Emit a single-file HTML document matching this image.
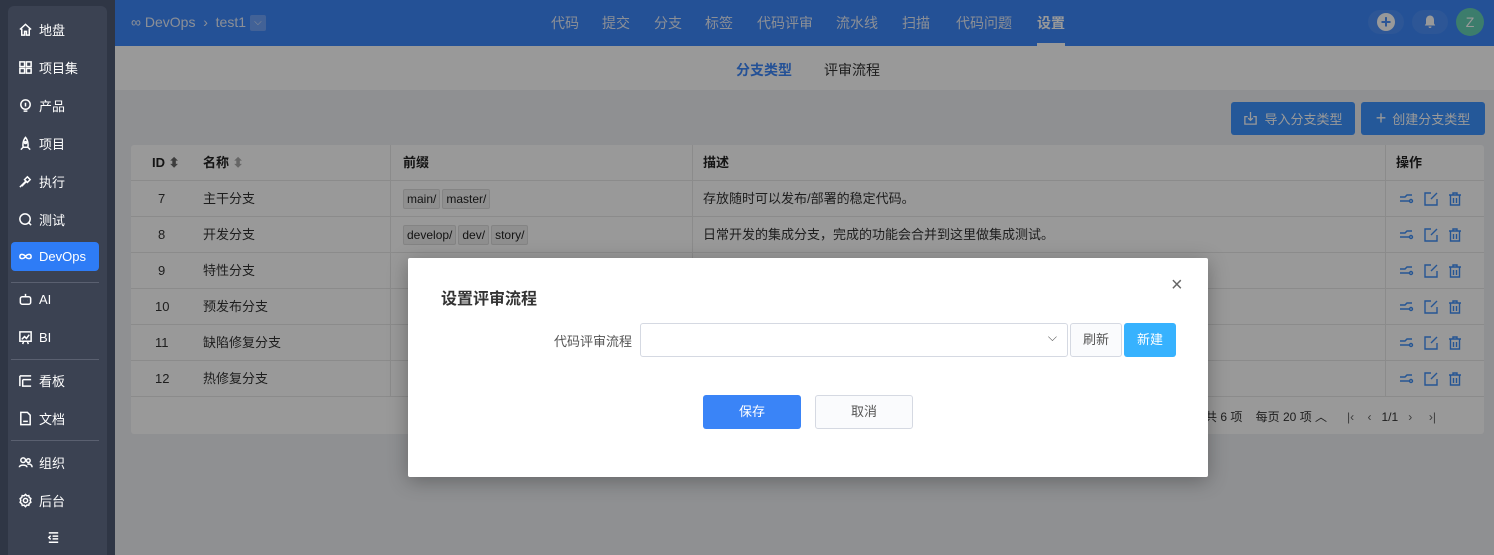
<!DOCTYPE html>
<html><head><meta charset="utf-8"><style>
*{box-sizing:border-box;margin:0;padding:0}
body{width:1494px;height:555px;overflow:hidden;font-family:"Liberation Sans","Noto Sans CJK SC",sans-serif;font-size:13px;background:#eef0f3;position:relative;color:#222}
.side{position:absolute;left:0;top:0;width:115px;height:555px;background:#2f3645;z-index:5}
.sp{position:absolute;left:8px;top:6px;width:99px;height:549px;background:#3b4252;border-radius:6px 6px 0 0}
.it{position:absolute;left:18px;height:28px;display:flex;align-items:center;color:#fff;font-size:13px}
.it svg{width:15px;height:15px;margin-right:6px;fill:none;stroke:#fff;stroke-width:1.6}
.act{position:absolute;left:11px;top:242px;width:88px;height:29px;background:#2e7cf6;border-radius:4px}
.hr{position:absolute;left:11px;width:88px;height:1px;background:#5a6070}
.top{position:absolute;left:115px;top:0;width:1379px;height:46px;background:#3d87fb}
.nav{position:absolute;top:13px;color:#e8eefa;font-size:14px}
.sub{position:absolute;left:115px;top:46px;width:1379px;height:44px;background:#fff}
.btn{position:absolute;top:102px;height:33px;background:#3d93ff;border-radius:3px;color:#fff;font-size:13px;display:flex;align-items:center;justify-content:center}
.tbl{position:absolute;left:131px;top:145px;width:1353px;height:289px;background:#fff;border-radius:3px}
.row{position:absolute;left:0;width:1353px;height:36px;border-bottom:1px solid #e8e8e8}
.c{position:absolute;top:0;line-height:36px;font-size:13px;color:#333}
.vl{position:absolute;top:0;width:1px;height:252px;background:#e8e8e8}
.tag{display:inline-block;background:#eee;border:1px solid #ddd;padding:2px 3px;margin-right:2px;font-size:12px;line-height:14px;color:#222;border-radius:2px}
.ops{position:absolute;left:1268px;top:10px;display:flex;gap:8px}
.ops svg{width:16px;height:16px;fill:none;stroke:#3e8ef7;stroke-width:1.4}
.ov{position:absolute;left:0;top:0;width:1494px;height:555px;background:rgba(0,0,0,.4)}
.modal{position:absolute;left:408px;top:258px;width:800px;height:219px;background:#fff;border-radius:2px;box-shadow:0 4px 20px rgba(0,0,0,.3)}
</style></head><body>
<div class="top">
<div style="position:absolute;left:16px;top:14px;color:#e8eefa;font-size:14px">∞ DevOps &nbsp;› &nbsp;test1 <span style="display:inline-block;width:16px;height:16px;background:#6fa3fc;border-radius:2px;vertical-align:middle;text-align:center;font-size:10px;line-height:16px">⌵</span></div>
<span class="nav" style="left:436px">代码</span><span class="nav" style="left:487px">提交</span><span class="nav" style="left:539px">分支</span><span class="nav" style="left:590px">标签</span><span class="nav" style="left:642px">代码评审</span><span class="nav" style="left:721px">流水线</span><span class="nav" style="left:787px">扫描</span><span class="nav" style="left:841px">代码问题</span><span class="nav" style="left:922px;color:#fff;font-weight:bold">设置</span>
<div style="position:absolute;left:922px;top:43px;width:28px;height:3px;background:#fff"></div>
<div style="position:absolute;left:1253px;top:10px;width:36px;height:24px;border-radius:12px;background:#4b90fb"><div style="margin:3px auto;width:18px;height:18px;border-radius:50%;background:#fff;color:#4b90fb;text-align:center;line-height:18px;font-size:18px;font-weight:bold">+</div></div>
<div style="position:absolute;left:1297px;top:10px;width:36px;height:24px;border-radius:12px;background:#4b90fb"><svg viewBox="0 0 16 16" style="position:absolute;left:10px;top:4px;width:16px;height:16px" fill="#fff"><path d="M8 1.5c-2.5 0-4 2-4 4.5v3.5L2.8 11.5h10.4L12 9.5V6c0-2.5-1.5-4.5-4-4.5zM6.5 12.5h3a1.5 1.5 0 0 1-3 0z"/></svg></div>
<div style="position:absolute;left:1341px;top:8px;width:28px;height:28px;border-radius:50%;background:#64d0b4;color:#fff;text-align:center;line-height:28px;font-size:14px">Z</div>
</div>
<div class="sub"><span style="position:absolute;left:621px;top:14px;color:#3d87fb;font-size:14px;font-weight:bold">分支类型</span><span style="position:absolute;left:709px;top:14px;color:#333;font-size:14px">评审流程</span></div>
<div class="btn" style="left:1231px;width:124px"><svg viewBox="0 0 16 16" style="width:15px;height:15px;margin-right:6px" fill="none" stroke="#fff" stroke-width="1.4"><path d="M5 6H2v8h12V6h-3M8 1v9M5.5 7.5L8 10l2.5-2.5"/></svg>导入分支类型</div>
<div class="btn" style="left:1361px;width:124px"><span style="font-size:18px;margin-right:6px">+</span>创建分支类型</div>
<div class="tbl">
<div class="row" style="top:0"><span class="c" style="left:21px;font-weight:bold;color:#222">ID <span style="color:#666">⬍</span></span><span class="c" style="left:72px;font-weight:bold;color:#222">名称 <span style="color:#aaa">⬍</span></span><span class="c" style="left:272px;font-weight:bold;color:#222">前缀</span><span class="c" style="left:572px;font-weight:bold;color:#222">描述</span><span class="c" style="left:1265px;font-weight:bold;color:#222">操作</span></div>
<div class="vl" style="left:259px"></div><div class="vl" style="left:561px"></div><div class="vl" style="left:1254px"></div>
</div>
<div style="position:absolute;left:131px;top:145px">
<div class="row" style="top:36px"><span class="c" style="left:27px">7</span><span class="c" style="left:72px">主干分支</span><span style="position:absolute;left:272px;top:8px"><span class="tag">main/</span><span class="tag">master/</span></span><span class="c" style="left:572px">存放随时可以发布/部署的稳定代码。</span><div class="ops"><svg viewBox="0 0 16 16"><path d="M1 6h5l2-2h5M1 10h9"/><circle cx="12" cy="10" r="1.5"/></svg><svg viewBox="0 0 16 16"><path d="M14 8v6H2V2h6M14 2L8 8"/></svg><svg viewBox="0 0 16 16"><path d="M2 4h12M6 4V2h4v2M3.5 4v10h9V4M6.5 7v5M9.5 7v5"/></svg></div></div>
<div class="row" style="top:72px"><span class="c" style="left:27px">8</span><span class="c" style="left:72px">开发分支</span><span style="position:absolute;left:272px;top:8px"><span class="tag">develop/</span><span class="tag">dev/</span><span class="tag">story/</span></span><span class="c" style="left:572px">日常开发的集成分支，完成的功能会合并到这里做集成测试。</span><div class="ops"><svg viewBox="0 0 16 16"><path d="M1 6h5l2-2h5M1 10h9"/><circle cx="12" cy="10" r="1.5"/></svg><svg viewBox="0 0 16 16"><path d="M14 8v6H2V2h6M14 2L8 8"/></svg><svg viewBox="0 0 16 16"><path d="M2 4h12M6 4V2h4v2M3.5 4v10h9V4M6.5 7v5M9.5 7v5"/></svg></div></div>
<div class="row" style="top:108px"><span class="c" style="left:27px">9</span><span class="c" style="left:72px">特性分支</span><div class="ops"><svg viewBox="0 0 16 16"><path d="M1 6h5l2-2h5M1 10h9"/><circle cx="12" cy="10" r="1.5"/></svg><svg viewBox="0 0 16 16"><path d="M14 8v6H2V2h6M14 2L8 8"/></svg><svg viewBox="0 0 16 16"><path d="M2 4h12M6 4V2h4v2M3.5 4v10h9V4M6.5 7v5M9.5 7v5"/></svg></div></div>
<div class="row" style="top:144px"><span class="c" style="left:24px">10</span><span class="c" style="left:72px">预发布分支</span><div class="ops"><svg viewBox="0 0 16 16"><path d="M1 6h5l2-2h5M1 10h9"/><circle cx="12" cy="10" r="1.5"/></svg><svg viewBox="0 0 16 16"><path d="M14 8v6H2V2h6M14 2L8 8"/></svg><svg viewBox="0 0 16 16"><path d="M2 4h12M6 4V2h4v2M3.5 4v10h9V4M6.5 7v5M9.5 7v5"/></svg></div></div>
<div class="row" style="top:180px"><span class="c" style="left:24px">11</span><span class="c" style="left:72px">缺陷修复分支</span><div class="ops"><svg viewBox="0 0 16 16"><path d="M1 6h5l2-2h5M1 10h9"/><circle cx="12" cy="10" r="1.5"/></svg><svg viewBox="0 0 16 16"><path d="M14 8v6H2V2h6M14 2L8 8"/></svg><svg viewBox="0 0 16 16"><path d="M2 4h12M6 4V2h4v2M3.5 4v10h9V4M6.5 7v5M9.5 7v5"/></svg></div></div>
<div class="row" style="top:216px"><span class="c" style="left:24px">12</span><span class="c" style="left:72px">热修复分支</span><div class="ops"><svg viewBox="0 0 16 16"><path d="M1 6h5l2-2h5M1 10h9"/><circle cx="12" cy="10" r="1.5"/></svg><svg viewBox="0 0 16 16"><path d="M14 8v6H2V2h6M14 2L8 8"/></svg><svg viewBox="0 0 16 16"><path d="M2 4h12M6 4V2h4v2M3.5 4v10h9V4M6.5 7v5M9.5 7v5"/></svg></div></div>
<div style="position:absolute;left:1074px;top:263px;font-size:12px;color:#333;white-space:nowrap">共 6 项 &nbsp;&nbsp; 每页 20 项 ︿ &nbsp;&nbsp;&nbsp;&nbsp; <span style="color:#666">|‹ &nbsp;&nbsp; ‹</span> &nbsp;&nbsp;1/1 &nbsp;&nbsp;<span style="color:#666">› &nbsp;&nbsp;&nbsp; ›|</span></div>
</div>
<div class="ov"></div>
<div class="side"><div class="sp"></div>
<div class="act"></div>
<div class="it" style="top:15px"><svg viewBox="0 0 16 16"><path d="M2 8L8 2.5 14 8M4 7v7h3v-4h2v4h3V7"/></svg>地盘</div>
<div class="it" style="top:53px"><svg viewBox="0 0 16 16"><rect x="2" y="2" width="5" height="5"/><rect x="9" y="2" width="5" height="5"/><rect x="2" y="9" width="5" height="5"/><rect x="9" y="9" width="5" height="5"/></svg>项目集</div>
<div class="it" style="top:91px"><svg viewBox="0 0 16 16"><circle cx="8" cy="7" r="5"/><path d="M6 14h4M8 5v4"/></svg>产品</div>
<div class="it" style="top:129px"><svg viewBox="0 0 16 16"><path d="M8 1.5C5 5 5 10 5.5 12h5C11 10 11 5 8 1.5zM5.5 12L3 14.5M10.5 12L13 14.5"/><circle cx="8" cy="7" r="1"/></svg>项目</div>
<div class="it" style="top:167px"><svg viewBox="0 0 16 16"><path d="M2 14l6-6M4 13l5-5M10 3l3 3-3 3-3-3z"/></svg>执行</div>
<div class="it" style="top:205px"><svg viewBox="0 0 16 16"><circle cx="7.5" cy="7.5" r="5.5"/><path d="M11.5 11.5L14 14"/></svg>测试</div>
<div class="it" style="top:242px"><svg viewBox="0 0 16 16"><path d="M8 8c-2-3-6-3-6 0s4 3 6 0 6-3 6 0-4 3-6 0"/></svg>DevOps</div>
<div class="hr" style="top:282px"></div>
<div class="it" style="top:285px"><svg viewBox="0 0 16 16"><rect x="2.5" y="5" width="11" height="8" rx="2"/><path d="M8 2v3M6 9h.1M10 9h.1"/></svg>AI</div>
<div class="it" style="top:323px"><svg viewBox="0 0 16 16"><rect x="2" y="2" width="12" height="10"/><path d="M4 10l3-3 2 2 3-4M6 12l-1 3M10 12l1 3"/></svg>BI</div>
<div class="hr" style="top:359px"></div>
<div class="it" style="top:366px"><svg viewBox="0 0 16 16"><path d="M2 3h12M2 3v11M5 7h9M5 7v7h9"/></svg>看板</div>
<div class="it" style="top:404px"><svg viewBox="0 0 16 16"><path d="M3 1.5h7l3 3v10H3zM5.5 11h5"/></svg>文档</div>
<div class="hr" style="top:440px"></div>
<div class="it" style="top:448px"><svg viewBox="0 0 16 16"><circle cx="5.5" cy="5.5" r="2.5"/><circle cx="11" cy="6" r="2"/><path d="M1.5 13c0-3 8-3 8 0M10 10c2-1 5 0 5 3"/></svg>组织</div>
<div class="it" style="top:486px"><svg viewBox="0 0 16 16"><circle cx="8" cy="8" r="2.3"/><path d="M8 1.5l1.5 1.5 2-.3.5 2 1.7 1.2-.7 2 .7 2-1.7 1.2-.5 2-2-.3L8 14.5 6.5 13l-2 .3-.5-2L2.3 10l.7-2-.7-2L4 4.7l.5-2 2 .3z"/></svg>后台</div>
<div class="it" style="top:523px;left:46px"><svg viewBox="0 0 16 16"><path d="M3 3h10M7 6.5h6M7 9.5h6M3 13h10M5 6L3 8l2 2"/></svg></div>
</div>
<div class="modal">
<div style="position:absolute;left:33px;top:27px;font-size:16px;font-weight:bold;color:#333">设置评审流程</div>
<div style="position:absolute;left:763px;top:16px;font-size:20px;color:#666">×</div>
<div style="position:absolute;left:146px;top:73px;color:#555">代码评审流程</div>
<div style="position:absolute;left:232px;top:65px;width:428px;height:34px;border:1px solid #d5d9e2;border-radius:3px"><span style="position:absolute;right:10px;top:6px;color:#555;font-size:12px">⌵</span></div>
<div style="position:absolute;left:662px;top:65px;width:52px;height:34px;border:1px solid #d5d9e2;border-radius:3px;background:#fafbfd;text-align:center;line-height:32px;color:#555">刷新</div>
<div style="position:absolute;left:716px;top:65px;width:52px;height:34px;border-radius:3px;background:#37b2fe;text-align:center;line-height:34px;color:#fff">新建</div>
<div style="position:absolute;left:295px;top:137px;width:98px;height:34px;border-radius:3px;background:#3a84f7;text-align:center;line-height:34px;color:#fff">保存</div>
<div style="position:absolute;left:407px;top:137px;width:98px;height:34px;border:1px solid #d5d9e2;border-radius:3px;background:#fafbfd;text-align:center;line-height:32px;color:#555">取消</div>
</div>
</body></html>
